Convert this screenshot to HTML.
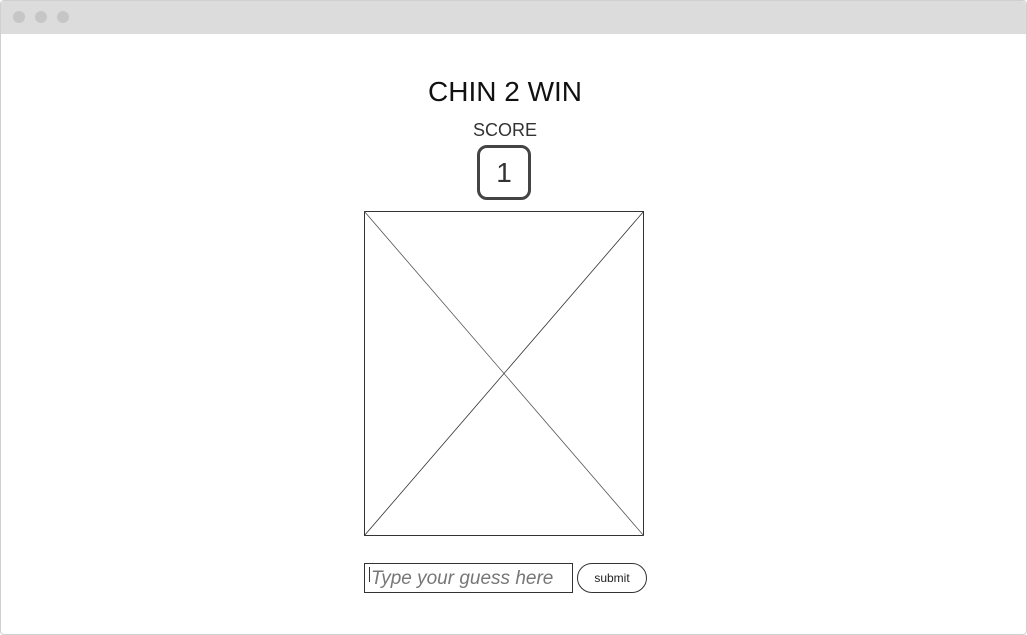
<!DOCTYPE html>
<html><head><style>
body{margin:0;width:1027px;height:635px;background:#fff;font-family:"Liberation Sans",sans-serif;position:relative;overflow:hidden}
.frame{position:absolute;left:0;top:0;width:1025px;height:633px;border:1px solid #d0d0d0;border-radius:4px;}
.bar{position:absolute;left:1px;top:1px;width:1025px;height:33px;background:#dcdcdc;border-radius:4px 4px 0 0}
.dot{position:absolute;top:10px;width:12px;height:12px;border-radius:50%;background:#c6c6c6}
.t{position:absolute;left:0;width:1010px;text-align:center;color:#222}
</style></head><body>
<div class="frame"></div>
<div class="bar"><div class="dot" style="left:12px"></div><div class="dot" style="left:34px"></div><div class="dot" style="left:56px"></div></div>
<div class="t" style="top:76px;font-size:28px;color:#111">CHIN 2 WIN</div>
<div class="t" style="top:120px;font-size:18px;color:#333">SCORE</div>
<div style="position:absolute;left:477px;top:145px;width:48px;height:49px;border:3px solid #444;border-radius:10px;text-align:center;line-height:49px;font-size:28px;color:#333">1</div>
<svg style="position:absolute;left:364px;top:211px" width="280" height="325">
<rect x="0.5" y="0.5" width="279" height="324" fill="#fff" stroke="#333"/>
<line x1="0" y1="0" x2="280" y2="325" stroke="#555" stroke-width="0.8"/>
<line x1="280" y1="0" x2="0" y2="325" stroke="#333" stroke-width="0.8"/>
</svg>
<div style="position:absolute;left:364px;top:563px;font-style:italic;font-size:19px;color:#777;line-height:30px;padding-left:6px;box-sizing:border-box;width:209px;height:30px;border:1px solid #333;white-space:nowrap">Type your guess here</div>
<div style="position:absolute;left:369px;top:567px;width:1px;height:15px;background:#333"></div>
<div style="position:absolute;left:577px;top:563px;width:68px;height:28px;border:1px solid #333;border-radius:15px;text-align:center;line-height:28px;font-size:12px;color:#222">submit</div>
</body></html>
